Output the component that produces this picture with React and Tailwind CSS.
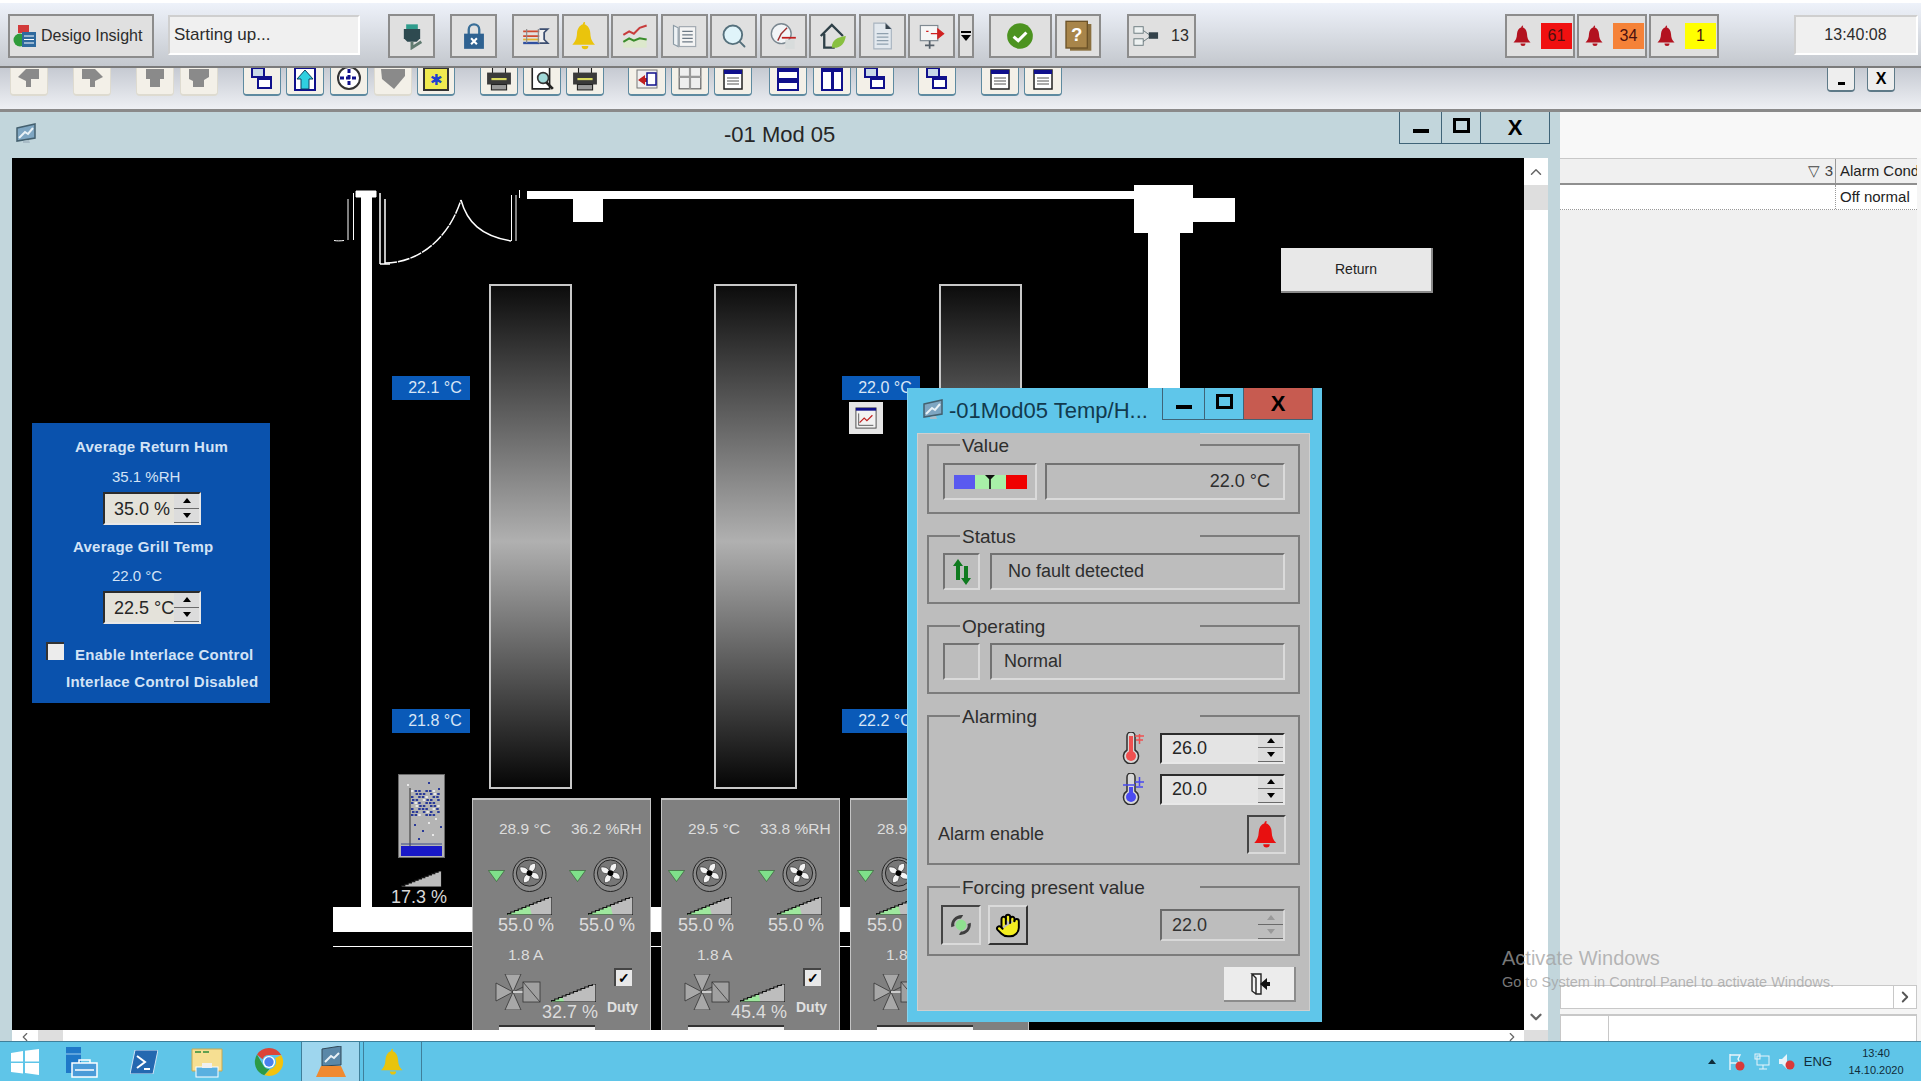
import React from "react";
import { ChevronDown, ChevronLeft, ChevronRight, ChevronUp, Hand, Search } from "lucide-react";

const BELL =
  "M12 1.5a1.6 1.6 0 0 0-1.6 1.7C7.6 4.2 6.2 6.800 6 10c-.2 4-1.200 6.300-3.500 8.500h17c-2.300-2.200-3.300-4.500-3.500-8.500-.2-3.200-1.600-5.800-4.400-6.800A1.600 1.600 0 0 0 12 1.500zM9.500 19.500a2.500 2.500 0 0 0 5 0z";

const Bell = ({ className, fill }) => (
  <svg viewBox="0 0 24 24" className={className}>
    <path d={BELL} fill={fill} />
  </svg>
);

// Desigo window icon, a small tilted monitor
const MonitorIcon = ({ className }) => (
  <svg viewBox="0 0 24 24" className={className}>
    <path d="M3 6l18-4v14L3 19z" fill="#7ea6c2" stroke="#44606f" strokeWidth="1.500" />
    <path d="M5 16l6-6 3 2 5-6" stroke="#e8f1f6" strokeWidth="2" fill="none" />
    <path d="M9 19l6-1 1 3H9z" fill="#a9bcc7" />
  </svg>
);

const Icons = {
  plug: (
    <svg viewBox="0 0 24 24" className="w-7 h-7">
      <rect x="7" y="2" width="10" height="4" fill="#2f9c8c" />
      <path d="M5 6h14v8l-3 3H8l-3-3z" fill="#2e4a50" />
      <path d="M12 17v5l8-5" stroke="#607a70" strokeWidth="2.500" fill="none" />
    </svg>
  ),
  lock: (
    <svg viewBox="0 0 24 24" className="w-7 h-7">
      <path d="M7.500 11V6.500a4.500 4.500 0 0 1 9 0V11" stroke="#3a6f98" strokeWidth="2" fill="none" />
      <rect x="3.500" y="10" width="17" height="13" fill="#2f6291" />
      <path d="M9.500 14l5 5M14.500 14l-5 5" stroke="#fff" strokeWidth="1.800" />
    </svg>
  ),
  compare: (
    <svg viewBox="0 0 24 24" className="w-7 h-7">
      <path d="M1 8h14M1 12h14" stroke="#d04a30" strokeWidth="1.500" />
      <path d="M1 15h14" stroke="#e0b030" strokeWidth="1.500" />
      <path d="M1 18h14" stroke="#3050a0" strokeWidth="2" />
      <path d="M4 6v12M14 6v12" stroke="#8a8a8a" />
      <path d="M15 6h7l-3 3v6l3 3h-7" stroke="#3c4e70" strokeWidth="1.500" fill="#f0f0f0" />
    </svg>
  ),
  bell: <Bell className="w-8 h-8" fill="#eac40c" />,
  trend: (
    <svg viewBox="0 0 24 24" className="w-7 h-7">
      <rect x="2" y="14" width="20" height="8" fill="#dce8cc" />
      <path d="M2 11l5-3 4 2 5-5 6-2" stroke="#c83c3c" strokeWidth="1.800" fill="none" />
      <path d="M2 17l5-3 4 2 5-2 6 1" stroke="#3a8c2c" strokeWidth="1.800" fill="none" />
    </svg>
  ),
  list: (
    <svg viewBox="0 0 24 24" className="w-7 h-7">
      <path d="M3 3l4 2v16l-4-2z" fill="#eef2f5" stroke="#8b9aa5" />
      <rect x="8" y="4" width="14" height="17" fill="#f4f4f4" stroke="#a0a8b0" />
      <path d="M10.500 8h9M10.500 11h9M10.500 14h9M10.500 17h9" stroke="#6d7a86" />
    </svg>
  ),
  search: <Search className="w-7 h-7 text-[#55707c]" fill="#e0f4fa" strokeWidth={1.600} />,
  clock: (
    <svg viewBox="0 0 24 24" className="w-7 h-7">
      <circle cx="10.500" cy="10" r="8.500" fill="#f2f5f7" stroke="#7a8790" strokeWidth="1.200" />
      <path d="M10.500 10l5-5M10.500 10l-3 6" stroke="#a03030" strokeWidth="1.200" />
      <path d="M11 13.500h12" stroke="#c02020" strokeWidth="1.500" />
      <rect x="14" y="15" width="8" height="8" fill="#d8dcdc" />
    </svg>
  ),
  home: (
    <svg viewBox="0 0 24 24" className="w-7 h-7">
      <path d="M1.500 12L11 2.500 20.500 12M4.500 10v12h9" stroke="#2e4048" strokeWidth="2" fill="none" />
      <path d="M11 22c0-7 5-9 12-10-1 7-5 11-12 10z" fill="#88c040" />
    </svg>
  ),
  doc: (
    <svg viewBox="0 0 24 24" className="w-7 h-7">
      <path d="M5 1h10l5 5v17H5z" fill="#e2e8ee" stroke="#a8b4c0" />
      <path d="M15 1l5 5h-5z" fill="#38454f" />
      <path d="M7.500 10h10M7.500 13h10M7.500 16h10M7.500 19h10" stroke="#8fa0ae" />
    </svg>
  ),
  exit: (
    <svg viewBox="0 0 24 24" className="w-7 h-7">
      <rect x="2" y="3" width="15" height="13" fill="#f6f6f6" stroke="#7f8a92" />
      <path d="M7 8h2M11 10h9M17 6l5 4-5 4z" stroke="#d02020" fill="#d02020" />
      <path d="M10 16v7M6 20h8" stroke="#56606a" strokeWidth="1.500" />
    </svg>
  ),
  check: (
    <svg viewBox="0 0 24 24" className="w-7 h-7">
      <circle cx="12" cy="12" r="11" fill="#4c9320" />
      <path d="M6.500 12.500l4 3.500 7-7" stroke="#fff" strokeWidth="2.600" fill="none" />
    </svg>
  ),
  help: (
    <svg viewBox="0 0 24 24" className="w-8 h-8">
      <rect x="6" y="3" width="16" height="20" fill="#8a6f3e" />
      <rect x="3" y="1" width="16" height="20" fill="#a8854a" stroke="#6b5228" />
      <text x="11" y="16" textAnchor="middle" fontSize="14" fontWeight="bold" fill="#fff" fontFamily="Liberation Sans">?</text>
    </svg>
  ),
  tree: (
    <svg viewBox="0 0 28 24" className="w-[26px] h-[24px]">
      <rect x="1" y="2" width="10" height="7" fill="#eef2f2" stroke="#68787c" />
      <rect x="1" y="15" width="10" height="7" fill="#eef2f2" stroke="#68787c" />
      <path d="M11 6l7 5M11 18l7-5" stroke="#68787c" />
      <rect x="17" y="8" width="10" height="7" fill="#33424a" />
    </svg>
  ),
};

const TopButton = ({ children, className = "w-[47px]" }) => (
  <div className={`h-[44px] shrink-0 flex items-center justify-center bg-[#e0e0e0] border-2 border-[#8c8c8c] ${className}`}>
    {children}
  </div>
);

const AlarmButton = ({ count, color }) => (
  <TopButton className="w-[70px] gap-[6px] pl-1">
    <Bell className="w-6 h-7" fill="#b3121f" />
    <div className={`w-[31px] h-[26px] flex items-center justify-center text-[16px] text-[#4a1010] ${color}`}>{count}</div>
  </TopButton>
);

const TopBar = () => (
  <div className="h-[68px] shrink-0 flex pt-[11px] pl-2 border-t-[3px] border-b-2 border-t-white border-b-[#7b7b7b] bg-gradient-to-b from-[#eef2fa] to-[#c4c8ce]">
    <TopButton className="w-[146px] gap-1 !justify-start pl-[3px]">
      <svg viewBox="0 0 24 24" className="w-6 h-7">
        <rect x="5" y="1" width="11" height="8" fill="#d23a3a" />
        <circle cx="7" cy="16" r="6.500" fill="#2f9c3a" />
        <rect x="9" y="8" width="14" height="15" fill="#2f6a9e" />
        <path d="M11 12h10M11 15.500h10M11 19h10" stroke="#fff" />
      </svg>
      <span className="text-[16px] text-[#2c2c2c]">Desigo Insight</span>
    </TopButton>
    <div className="w-[192px] h-[40px] mt-[1px] ml-[14px] shrink-0 pl-[4px] flex items-center bg-[#f0f0f0] border-2 border-[#cfcfcf] border-b-white border-r-white text-[17px] text-[#2c2c2c]">
      Starting up...
    </div>
    <div className="ml-[28px]"><TopButton>{Icons.plug}</TopButton></div>
    <div className="ml-[15px]"><TopButton>{Icons.lock}</TopButton></div>
    <div className="ml-[15px] flex gap-[2.500px]">
      <TopButton>{Icons.compare}</TopButton>
      <TopButton>{Icons.bell}</TopButton>
      <TopButton>{Icons.trend}</TopButton>
      <TopButton>{Icons.list}</TopButton>
      <TopButton>{Icons.search}</TopButton>
      <TopButton>{Icons.clock}</TopButton>
      <TopButton>{Icons.home}</TopButton>
      <TopButton>{Icons.doc}</TopButton>
      <TopButton>{Icons.exit}</TopButton>
      <TopButton className="w-[16px] flex-col">
        <div className="w-[10px] h-[2px] bg-black mb-[2px]" />
        <div className="w-0 h-0 border-x-[5px] border-x-transparent border-t-[6px] border-t-black" />
      </TopButton>
    </div>
    <div className="ml-[15px] flex gap-[3px]">
      <TopButton className="w-[63px]">{Icons.check}</TopButton>
      <TopButton className="w-[46px]">{Icons.help}</TopButton>
    </div>
    <div className="ml-[26px]">
      <TopButton className="w-[69px] gap-3">
        {Icons.tree}
        <span className="text-[16px] text-[#2c2c2c]">13</span>
      </TopButton>
    </div>
    <div className="ml-[309px] flex gap-[2px]">
      <AlarmButton count="61" color="bg-[#f01010]" />
      <AlarmButton count="34" color="bg-[#f58238]" />
      <AlarmButton count="1" color="bg-[#ffff00]" />
    </div>
    <div className="w-[124px] h-[40px] mt-[1px] ml-[75px] shrink-0 flex items-center justify-center bg-[#f0f0f0] border-2 border-[#cfcfcf] border-b-white border-r-white text-[16px] text-[#2c2c2c]">
      13:40:08
    </div>
  </div>
);

const GREY_SHAPES = {
  left: "M1 8L9 0h13v10h-8v8H9v-6z",
  right: "M23 8L15 0H2v10h8v8h5v-6z",
  sq: "M3 0h18v10h-4v8H7v-8H3z",
  sqr: "M2 0h20v8l-5 3v7H6v-6L2 10z",
  down: "M0 0h24v7L13 20 1 10z",
};

const SmallIcon = ({ kind }) => {
  if (GREY_SHAPES[kind])
    return (
      <svg viewBox="0 0 24 20" className="w-[24px] h-[20px] mb-[2px]">
        <path d={GREY_SHAPES[kind]} fill="#8a8a8a" />
      </svg>
    );
  if (kind === "split-h")
    return <div className="w-[22px] h-[24px] border-2 border-[#10108c] border-t-[5px] bg-white flex flex-col justify-center"><div className="h-[5px] bg-[#10108c]" /></div>;
  if (kind === "split-v")
    return <div className="w-[22px] h-[24px] border-2 border-[#10108c] border-t-[5px] bg-white flex justify-center"><div className="w-[3px] bg-[#10108c]" /></div>;
  if (kind === "casc")
    return (
      <svg viewBox="0 0 24 24" className="w-[24px] h-[24px]">
        <rect x="2" y="1" width="12" height="9" fill="#c8d8e8" stroke="#10108c" strokeWidth="2" />
        <rect x="8" y="10" width="13" height="11" fill="#fff" stroke="#10108c" strokeWidth="2" />
        <rect x="8" y="10" width="13" height="3" fill="#10108c" />
      </svg>
    );
  if (kind === "up")
    return (
      <svg viewBox="0 0 24 24" className="w-[24px] h-[24px]">
        <rect x="2" y="1" width="20" height="22" fill="#fff" stroke="#10108c" strokeWidth="2" />
        <path d="M12 3l8 9h-4v10H8V12H4z" fill="#30d0e0" stroke="#104060" />
      </svg>
    );
  if (kind === "compass")
    return (
      <svg viewBox="0 0 24 24" className="w-[24px] h-[24px]">
        <circle cx="12" cy="11" r="11" fill="#fff" stroke="#333" strokeWidth="2" />
        <path d="M12 2v18M3 11h18" stroke="#10108c" strokeWidth="3" strokeDasharray="4 2" />
      </svg>
    );
  if (kind === "sun")
    return (
      <div className="w-[26px] h-[24px] bg-[#f0ea50] border-2 border-[#333] flex items-center justify-center text-[#2040d0] text-[15px] leading-none">✱</div>
    );
  if (kind === "print")
    return (
      <svg viewBox="0 0 24 24" className="w-[26px] h-[26px]">
        <rect x="6" y="0" width="12" height="8" fill="#ddd" stroke="#222" />
        <rect x="1" y="7" width="22" height="11" fill="#3a3a3a" />
        <rect x="5" y="12" width="14" height="2" fill="#dada60" />
        <rect x="5" y="18" width="14" height="5" fill="#999" stroke="#222" />
      </svg>
    );
  if (kind === "preview")
    return (
      <svg viewBox="0 0 24 24" className="w-[26px] h-[26px]">
        <path d="M3 1h16v21H3z" fill="#fff" stroke="#222" strokeWidth="1.500" />
        <circle cx="13" cy="12" r="5" fill="#a0d8d8" stroke="#333" strokeWidth="1.500" />
        <path d="M16 16l6 6" stroke="#222" strokeWidth="2.500" />
      </svg>
    );
  if (kind === "table")
    return (
      <svg viewBox="0 0 24 24" className="w-[26px] h-[26px]">
        <rect x="2" y="1" width="20" height="21" fill="#eee" stroke="#555" />
        <path d="M12 1v21M2 11h20" stroke="#999" strokeWidth="2" />
      </svg>
    );
  if (kind === "note")
    return (
      <svg viewBox="0 0 24 24" className="w-[24px] h-[24px]">
        <rect x="3" y="3" width="18" height="19" fill="#fff" stroke="#222" strokeWidth="1.500" />
        <rect x="3" y="3" width="18" height="4" fill="#10108c" />
        <path d="M6 11h12M6 14h12M6 17h12" stroke="#555" />
      </svg>
    );
  return (
    <svg viewBox="0 0 24 24" className="w-[24px] h-[24px]">
      <rect x="2" y="3" width="20" height="18" fill="#f0f0f0" stroke="#777" />
      <path d="M3 13l7-5v3h5v4h-5v3z" fill="#c02020" />
      <rect x="12" y="6" width="9" height="12" fill="#fff" stroke="#10108c" strokeWidth="1.500" />
    </svg>
  );
};

const ToolButton = ({ kind, off, className = "" }) => (
  <div
    className={`w-[38px] h-[28px] shrink-0 overflow-hidden flex justify-center items-end pb-[3px] rounded-b-[4px] bg-[#f3f0e8] border-x border-b-2 ${
      off ? "border-[#dedbd0]" : "border-[#5e8aa0]"
    } ${className}`}
  >
    <SmallIcon kind={kind} />
  </div>
);

const SecondBar = () => (
  <div className="h-[44px] shrink-0 flex items-start pl-[10px] border-b-[3px] border-b-[#8a8a8a] bg-gradient-to-b from-[#c6cad2] to-[#eef0f4]">
    <ToolButton off kind="left" />
    <ToolButton off kind="right" className="ml-[25px]" />
    <ToolButton off kind="sq" className="ml-[25px]" />
    <ToolButton off kind="sqr" className="ml-[6px]" />
    <ToolButton kind="casc" className="ml-[25px]" />
    <ToolButton kind="up" className="ml-[5px]" />
    <ToolButton kind="compass" className="ml-[6px]" />
    <ToolButton off kind="down" className="ml-[6px]" />
    <ToolButton kind="sun" className="ml-[5px]" />
    <ToolButton kind="print" className="ml-[25px]" />
    <ToolButton kind="preview" className="ml-[5px]" />
    <ToolButton kind="print" className="ml-[5px]" />
    <ToolButton kind="redbox" className="ml-[24px]" />
    <ToolButton kind="table" className="ml-[5px]" />
    <ToolButton kind="note" className="ml-[5px]" />
    <ToolButton kind="split-h" className="ml-[17px]" />
    <ToolButton kind="split-v" className="ml-[6px]" />
    <ToolButton kind="casc" className="ml-[5px]" />
    <ToolButton kind="casc" className="ml-[24px]" />
    <ToolButton kind="note" className="ml-[25px]" />
    <ToolButton kind="note" className="ml-[5px]" />
    <div className="ml-[765px] w-[28px] h-[24px] rounded-b-[4px] bg-[#eeeeee] border-x border-b-2 border-[#5e7a88] flex justify-center items-center">
      <div className="w-[7px] h-[3px] bg-black mt-2" />
    </div>
    <div className="ml-[12px] w-[28px] h-[24px] rounded-b-[4px] bg-[#eeeeee] border-x border-b-2 border-[#5e7a88] flex justify-center items-center text-[16px] font-bold text-black">
      X
    </div>
  </div>
);

// staircase ramp used for fan speed and valve position
const Ramp = ({ pct = 0, className = "w-[45px] h-[18px]" }) => {
  const steps = 12;
  const pts = (limit) => {
    let d = "M0 18";
    for (let i = 1; i <= steps; i++) {
      const x = (i * 45) / steps;
      if (x > limit + 0.01) break;
      const y = 18 - (i * 18) / steps;
      d += `L${x - 45 / steps} ${y}L${x} ${y}`;
    }
    return d;
  };
  const end = (pct / 100) * 45;
  return (
    <svg viewBox="0 0 45 18" className={className}>
      <path d={pts(45) + "L45 18Z"} fill="#bdbdbd" />
      {pct > 0 && <path d={pts(end) + `L${end} 18Z`} fill="#9ee89e" />}
      <path d={pts(45) + "L45 18L0 18"} fill="none" stroke="#111" strokeWidth="1.200" />
    </svg>
  );
};

const Fan = () => (
  <svg viewBox="0 0 36 36" className="w-[35px] h-[35px]">
    <ellipse cx="18" cy="18" rx="17" ry="17.500" fill="#8c8c8c" stroke="#222" strokeWidth="1" />
    <circle cx="18" cy="16.500" r="13.500" fill="#777" stroke="#222" />
    <path d="M18 16.500c-2-7 1-10 6-10 1 5-1 8-6 10zM18 16.500c7-2 10 1 10 6-5 1-8-1-10-6zM18 16.500c2 7-1 10-6 10-1-5 1-8 6-10zM18 16.500c-7 2-10-1-10-6 5-1 8 1 10 6z" fill="#f4f4f4" stroke="#222" strokeWidth=".6" />
    <circle cx="18" cy="16.500" r="3" fill="#000" />
  </svg>
);

const Valve = () => (
  <svg viewBox="0 0 46 36" className="w-[46px] h-[36px]">
    <path d="M10 0h16l-8 18zM10 36h16l-8-18zM1 9v18l17-9zM18 18l12-6" fill="#a8a8a8" stroke="#333" strokeWidth=".8" />
    <path d="M18 18h10" stroke="#ccc" strokeWidth="2" />
    <rect x="28" y="8" width="17" height="20" fill="#a0a0a0" stroke="#333" strokeWidth=".8" />
    <path d="M28 8l17 20" stroke="#333" strokeWidth=".8" />
  </svg>
);

const FanColumn = ({ width }) => (
  <div className={width}>
    <div className="flex items-center gap-[7px] h-[38px]">
      <svg viewBox="0 0 17 12" className="w-[17px] h-[12px] mt-1">
        <path d="M.5.5h16L8.500 11.500z" fill="#7fe08a" stroke="#2a5a2a" strokeWidth=".6" />
      </svg>
      <Fan />
    </div>
    <div className="ml-[19px] mt-[4px] h-[18px]"><Ramp pct={55} /></div>
    <div className="ml-[10px] h-[21px] text-[18px] leading-[21px] text-[#dcdcdc]">55.0 %</div>
  </div>
);

const AhuPanel = ({ left, temp, hum, amps, valve, valvePct, fanGap }) => (
  <div className={`absolute top-[640px] w-[179px] h-[240px] bg-[#808080] border-t-2 border-x border-[#c4c4c4] text-[#dcdcdc] ${left}`}>
    <div className="flex pl-[26px] pt-[20px] text-[15.500px] leading-[18px]">
      <span className="w-[72px]">{temp}</span>
      <span>{hum}</span>
    </div>
    <div className={`flex mt-[17px] ${fanGap === 90 ? "pl-[6px]" : "pl-[15px]"}`}>
      <FanColumn width={fanGap === 90 ? "w-[90px]" : "w-[81px]"} />
      <FanColumn width="w-[80px]" />
    </div>
    <div className="ml-[35px] mt-[10px] text-[15.500px] leading-[18px]">{amps}</div>
    <div className="flex h-[61px]">
      <div className="ml-[22px] mt-[10px]"><Valve /></div>
      <div className="ml-[10px] mt-[20px] w-[50px]">
        <Ramp pct={valvePct} />
        <div className="-ml-[9px] text-[18px] leading-[21px] whitespace-nowrap">{valve}</div>
      </div>
      <div className="ml-[6px] mt-[4px] flex flex-col items-start">
        <div className="ml-[7px] w-[18px] h-[18px] bg-[#e8e8e8] border-t-2 border-l-2 border-[#444] flex items-center justify-center text-[14px] font-bold leading-none text-black">✓</div>
        <div className="mt-[12px] text-[14px] font-bold leading-[18px] text-[#e0e0e0]">Duty</div>
      </div>
    </div>
    <div className="ml-[26px] w-[96px] h-[20px] bg-[#f2f2f2] border-t-2 border-[#333]" />
  </div>
);

const TempTag = ({ className, children }) => (
  <div className={`absolute w-[78px] h-[24px] pl-[8px] flex items-center justify-center bg-[#0a5ab8] text-[16px] text-[#d8e6f6] ${className}`}>
    {children}
  </div>
);

const Tower = ({ className }) => (
  <div className={`absolute top-[126px] w-[83px] h-[505px] border-2 border-[#c8c8c8] bg-[linear-gradient(to_bottom,#0c0c0c,#b0b0b0_51%,#060606)] ${className}`} />
);

const Spin = ({ value, width = "w-[125px]", height = "h-[31px]", pad = "pl-[10px]", text = "text-[18px]", disabled, inner = "bg-[#e4e4e4]" }) => (
  <div className={`flex shrink-0 border-t-2 border-l-2 border-r-2 border-b-2 ${disabled ? "border-t-[#6a6a6a] border-l-[#6a6a6a] border-r-[#d8d8d8] border-b-[#d8d8d8]" : "border-t-[#2c2c2c] border-l-[#2c2c2c] border-r-[#e8e8e8] border-b-[#e8e8e8]"} ${width} ${height}`}>
    <div className={`flex-1 min-w-0 overflow-hidden whitespace-nowrap flex items-center ${pad} ${text} ${disabled ? "bg-[#bdbdbd] text-[#333]" : `${inner} text-[#262626]`}`}>
      {value}
    </div>
    <div className={`w-[25px] shrink-0 flex flex-col ${disabled ? "bg-[#bdbdbd]" : "bg-[#dcdcdc]"}`}>
      <div className="flex-1 flex items-center justify-center border-b border-[#6a6a6a]">
        <div className={`w-0 h-0 border-x-[4px] border-x-transparent border-b-[5px] ${disabled ? "border-b-[#999]" : "border-b-black"}`} />
      </div>
      <div className="flex-1 flex items-center justify-center border-b border-[#6a6a6a]">
        <div className={`w-0 h-0 border-x-[4px] border-x-transparent border-t-[5px] ${disabled ? "border-t-[#999]" : "border-t-black"}`} />
      </div>
    </div>
  </div>
);

const BluePanel = () => (
  <div className="absolute left-[20px] top-[265px] w-[238px] h-[280px] bg-[#0a52ad] pt-[14px] text-[15px] leading-[20px] text-[#d3e3f6]">
    <div className="ml-[43px] font-bold tracking-[.25px]">Average Return Hum</div>
    <div className="ml-[80px] mt-[10px]">35.1 %RH</div>
    <div className="ml-[71px] mt-[5px]">
      <Spin value="35.0 %" width="w-[98px]" height="h-[33px]" pad="pl-[9px]" inner="bg-[#e4e2da]" />
    </div>
    <div className="ml-[41px] mt-[12px] font-bold tracking-[.25px]">Average Grill Temp</div>
    <div className="ml-[80px] mt-[9px]">22.0 °C</div>
    <div className="ml-[71px] mt-[5px]">
      <Spin value="22.5 °C" width="w-[98px]" height="h-[33px]" pad="pl-[9px]" inner="bg-[#e4e2da]" />
    </div>
    <div className="flex mt-[18px] ml-[14px]">
      <div className="w-[18px] h-[18px] bg-[#ececec] border-t-2 border-l-2 border-[#333]" />
      <div className="ml-[11px] mt-[3px] font-bold tracking-[.25px] whitespace-nowrap">Enable Interlace Control</div>
    </div>
    <div className="ml-[34px] mt-[7px] font-bold tracking-[.25px] whitespace-nowrap">Interlace Control Disabled</div>
  </div>
);

const dots = [];
for (let row = 0; row < 9; row++) {
  for (let col = 0; col < 8; col++) {
    if ((row * 3 + col * 5) % 4 !== 3) dots.push([13 + col * 3.600 + (row % 2), 16 + row * 3]);
  }
}
const looseDots = [[9, 10], [30, 8], [40, 14], [37, 44], [16, 50], [24, 56], [34, 60], [42, 52], [20, 64], [30, 48]];

const Device = () => (
  <svg viewBox="0 0 47 84" className="absolute left-[386px] top-[616px] w-[47px] h-[84px]">
    <rect x=".5" y=".5" width="46" height="83" fill="#b4b4b4" stroke="#6a6a6a" />
    {dots.map(([x, y], i) => (
      <rect key={i} x={x} y={y} width="2.500" height="2" fill={i % 5 === 0 ? "#e8e8e8" : "#2a3a98"} />
    ))}
    {looseDots.map(([x, y], i) => (
      <rect key={i} x={x} y={y} width="2" height="2" fill={i % 3 === 0 ? "#e8e8e8" : "#2a3a98"} />
    ))}
    <path d="M12 14v66" stroke="#333" />
    <rect x="3" y="72" width="41" height="10" fill="#1818c8" />
    <path d="M3 70h41" stroke="#3a4a88" />
  </svg>
);

const Duct = ({ className }) => <div className={`absolute bg-white ${className}`} />;

const Canvas = () => (
  <div className="relative w-[1512px] h-[872px] overflow-hidden bg-black">
    <Duct className="left-[515px] top-[33px] w-[619px] h-[8px]" />
    <Duct className="left-[561px] top-[41px] w-[30px] h-[23px]" />
    <Duct className="left-[1122px] top-[27px] w-[59px] h-[48px]" />
    <Duct className="left-[1181px] top-[40px] w-[42px] h-[24px]" />
    <Duct className="left-[1136px] top-[75px] w-[32px] h-[200px]" />
    <Duct className="left-[349px] top-[39px] w-[11px] h-[710px]" />
    <Duct className="left-[321px] top-[749px] w-[517px] h-[25px]" />
    <Duct className="left-[321px] top-[788px] w-[517px] h-[1px]" />
    {/* door swing drawing */}
    <svg viewBox="0 0 200 90" className="absolute left-[318px] top-[27px] w-[200px] h-[90px]" fill="none" stroke="#fff">
      <path d="M26 6h20v6H26z" fill="#fff" />
      <path d="M18 14v41M23.500 8v47M4 55.500c3 .5 6 .5 10 0" />
      <path d="M50 8v71M55 14v65M50 79h10" strokeWidth="1.500" />
      <path d="M55 78c30 0 62-20 76-63" strokeWidth="1.500" strokeDasharray="12 1" />
      <path d="M131 15c6 22 20 36 50 41" strokeWidth="1.500" />
      <path d="M181.500 10v46M186 10v46M189.500 5v8" />
    </svg>
    <div className="absolute left-[1269px] top-[90px] w-[152px] h-[45px] flex items-center justify-center bg-[#e8e8e8] border-r-2 border-b-2 border-[#8a8a8a] text-[14px] text-[#222]">
      Return
    </div>
    <Tower className="left-[477px]" />
    <Tower className="left-[702px]" />
    <Tower className="left-[927px]" />
    <TempTag className="left-[380px] top-[218px]">22.1 °C</TempTag>
    <TempTag className="left-[380px] top-[551px]">21.8 °C</TempTag>
    <TempTag className="left-[830px] top-[218px]">22.0 °C</TempTag>
    <TempTag className="left-[830px] top-[551px]">22.2 °C</TempTag>
    <div className="absolute left-[837px] top-[244px] w-[34px] h-[32px] bg-[#e6e6e6] flex items-center justify-center">
      <svg viewBox="0 0 24 24" className="w-[24px] h-[22px]">
        <rect x="1" y="1" width="22" height="22" fill="#f2f2f2" stroke="#444" />
        <rect x="1" y="1" width="22" height="3" fill="#10108c" />
        <path d="M4 7v13h16" stroke="#555" fill="none" />
        <path d="M5 17l5-5 3 3 6-6" stroke="#c02020" fill="none" strokeWidth="1.300" />
      </svg>
    </div>
    <BluePanel />
    <Device />
    <Ramp className="absolute left-[388px] top-[713px] w-[43px] h-[16px]" />
    <div className="absolute left-[379px] top-[728px] text-[18px] leading-[22px] text-[#d8d8d8]">17.3 %</div>
    <AhuPanel left="left-[460px]" temp="28.9 °C" hum="36.2 %RH" amps="1.8 A" valve="32.7 %" valvePct={30} fanGap={81} />
    <AhuPanel left="left-[649px]" temp="29.5 °C" hum="33.8 %RH" amps="1.8 A" valve="45.4 %" valvePct={45} fanGap={90} />
    <AhuPanel left="left-[838px]" temp="28.9 °C" hum="36.2 %RH" amps="1.8 A" valve="32.7 %" valvePct={30} fanGap={90} />
  </div>
);

const WindowControls = ({ className, close = "bg-transparent" }) => (
  <div className={`flex border-l border-b border-r border-[#3f6478] ${className}`}>
    <div className="w-[42px] flex items-center justify-center border-r border-[#3f6478]">
      <div className="w-[16px] h-[4px] mt-[6px] bg-black" />
    </div>
    <div className="w-[39px] flex items-center justify-center border-r border-[#3f6478]">
      <div className="w-[17px] h-[15px] mb-[5px] border-[3px] border-black" />
    </div>
    <div className={`flex-1 flex items-center justify-center text-[22px] leading-none font-bold text-black ${close}`}>X</div>
  </div>
);

const Group = ({ title, className, children }) => (
  <div className={`relative border-2 border-[#7c7c7c] ${className}`}>
    <div className="absolute left-[31px] -top-[13px] w-[240px] h-[26px] pl-[2px] bg-[#bdbdbd] text-[19px] leading-[26px] text-[#2e2e2e]">
      {title}
    </div>
    {children}
  </div>
);

const Sunken = ({ className, children }) => (
  <div className={`flex items-center h-[37px] border-t-2 border-l-2 border-r-2 border-b-2 border-t-[#727272] border-l-[#727272] border-r-[#dadada] border-b-[#dadada] text-[18px] text-[#2e2e2e] ${className}`}>
    {children}
  </div>
);

const Thermo = ({ color, sign }) => (
  <svg viewBox="0 0 26 32" className="w-[26px] h-[32px] shrink-0">
    <path d="M8 4a4 4 0 0 1 8 0v14a7.500 7.500 0 1 1-8 0z" fill="#d8d8d8" stroke="#2e2e2e" strokeWidth="1.500" />
    <circle cx="12" cy="24" r="5" fill={color} />
    <rect x="10" y={sign === "+" ? 4 : 14} width="4" height={sign === "+" ? 18 : 10} fill={color} />
    <path d={sign === "+" ? "M16 4h9M20.500 2v10M17 8h7" : "M4 12h12M16 9h9M20.500 4v9M17 14h7"} stroke={color} strokeWidth="1.500" />
  </svg>
);

const Dialog = () => (
  <div className="absolute left-[907px] top-[388px] w-[415px] h-[634px] flex flex-col bg-[#5fc6ea] border-l border-[#88d4ee]">
    <div className="h-[45px] shrink-0 flex items-start">
      <MonitorIcon className="w-[24px] h-[24px] ml-[13px] mt-[10px] shrink-0" />
      <div className="ml-[4px] mt-[9px] w-[212px] text-[22px] leading-[28px] text-[#123a4e] whitespace-nowrap">-01Mod05 Temp/H...</div>
      <WindowControls className="ml-auto mr-[9px] w-[151px] h-[32px]" close="bg-[#c75b50]" />
    </div>
    <div className="ml-[9px] mr-[12px] h-[578px] px-[9px] pt-[10px] bg-[#bdbdbd] border border-[#cfcfcf]">
      <Group title="Value" className="h-[70px]">
        <div className="flex pl-[14px] pt-[17px]">
          <Sunken className="w-[94px] justify-center">
            <div className="w-[21px] h-[14px] bg-[#5a5af0]" />
            <div className="w-[31px] h-[14px] bg-[#a8f0a8] flex justify-center">
              <svg viewBox="0 0 10 14" className="w-[10px] h-[14px]">
                <path d="M0 0h10L5 5z M4.200 4h1.600v10H4.200z" fill="#111" />
              </svg>
            </div>
            <div className="w-[21px] h-[14px] bg-[#f00000]" />
          </Sunken>
          <Sunken className="w-[240px] ml-[8px] justify-end pr-[13px]">22.0 °C</Sunken>
        </div>
      </Group>
      <Group title="Status" className="h-[69px] mt-[21px]">
        <div className="flex pl-[14px] pt-[16px]">
          <Sunken className="w-[37px] justify-center">
            <svg viewBox="0 0 20 26" className="w-[20px] h-[26px]">
              <path d="M6 0l5 7H8v14H4V7H1zM14 26l-5-7h3V7h4v12h3z" fill="#0f7a1f" />
            </svg>
          </Sunken>
          <Sunken className="w-[295px] ml-[10px] pl-[16px]">No fault detected</Sunken>
        </div>
      </Group>
      <Group title="Operating" className="h-[69px] mt-[21px]">
        <div className="flex pl-[14px] pt-[16px]">
          <Sunken className="w-[37px]" />
          <Sunken className="w-[295px] ml-[10px] pl-[12px]">Normal</Sunken>
        </div>
      </Group>
      <Group title="Alarming" className="h-[150px] mt-[21px]">
        <div className="flex justify-end items-center gap-[15px] pr-[13px] pt-[15px]">
          <Thermo color="#f05050" sign="+" />
          <Spin value="26.0" />
        </div>
        <div className="flex justify-end items-center gap-[15px] pr-[13px] mt-[9px]">
          <Thermo color="#4a4af0" sign="-" />
          <Spin value="20.0" />
        </div>
        <div className="flex items-center justify-between pl-[9px] pr-[12px] mt-[10px]">
          <span className="text-[18px] text-[#2e2e2e]">Alarm enable</span>
          <div className="w-[39px] h-[39px] flex items-center justify-center border-t-2 border-l-2 border-r-2 border-b-2 border-t-[#444] border-l-[#444] border-r-[#dadada] border-b-[#dadada]">
            <Bell className="w-[31px] h-[33px]" fill="#e81010" />
          </div>
        </div>
      </Group>
      <Group title="Forcing present value" className="h-[70px] mt-[21px]">
        <div className="flex items-center pl-[12px] pt-[17px]">
          <div className="w-[40px] h-[40px] flex items-center justify-center border-t-2 border-l-2 border-r-2 border-b-2 border-t-[#444] border-l-[#444] border-r-[#dadada] border-b-[#dadada]">
            <svg viewBox="0 0 24 24" className="w-[26px] h-[26px]">
              <circle cx="12" cy="12" r="5" fill="#8fe08f" />
              <path d="M3 14C2 7 8 2 14 3l-2 3C8 6 5 9 6 13zM21 10c1 7-5 12-11 11l2-3c4 0 7-3 6-7z" fill="#3e3e3e" />
            </svg>
          </div>
          <div className="w-[40px] h-[40px] ml-[7px] flex items-center justify-center border-t-2 border-l-2 border-r-2 border-b-2 border-t-[#dadada] border-l-[#dadada] border-r-[#333] border-b-[#333]">
            <Hand className="w-[26px] h-[27px] text-black" fill="#f4ee20" strokeWidth={1.800} />
          </div>
          <div className="ml-auto mr-[13px]">
            <Spin value="22.0" disabled height="h-[32px]" />
          </div>
        </div>
      </Group>
      <div className="flex justify-end pr-[4px] mt-[11px]">
        <div className="w-[72px] h-[35px] flex items-center justify-center bg-[#ececec] border-r-2 border-b-2 border-[#8c8c8c]">
          <svg viewBox="0 0 24 24" className="w-[24px] h-[24px]">
            <path d="M5 2h9v20H9V6L5 2zM5 2v17l4 3" fill="#f6f6f6" stroke="#222" strokeWidth="1.400" />
            <path d="M13 12l7-6v4h3v4h-3v4z" fill="#111" />
          </svg>
        </div>
      </div>
    </div>
  </div>
);

const ModWindow = () => (
  <div className="w-[1560px] shrink-0 flex flex-col bg-[#c2d6dc]">
    <div className="h-[46px] shrink-0 relative flex items-start">
      <MonitorIcon className="w-[24px] h-[26px] ml-[14px] mt-[9px]" />
      <div className="w-[1512px] -ml-[26px] pl-[712px] pt-[9px] text-[22px] leading-[28px] text-[#262626]">-01 Mod 05</div>
      <WindowControls className="absolute left-[1399px] top-0 w-[151px] h-[32px]" />
    </div>
    <div className="flex pl-[12px]">
      <Canvas />
      <div className="w-[24px] h-[872px] flex flex-col items-center bg-white">
        <div className="h-[27px] flex items-center">
          <ChevronUp className="w-[18px] h-[18px] text-[#666]" />
        </div>
        <div className="w-full h-[25px] bg-[#dedede]" />
        <div className="mt-auto mb-[4px]">
          <ChevronDown className="w-[18px] h-[18px] text-[#666]" strokeWidth={3} />
        </div>
      </div>
    </div>
    <div className="h-[11px] ml-[12px] w-[1536px] flex bg-white overflow-hidden">
      <div className="w-[26px] flex items-start justify-center">
        <ChevronLeft className="w-[14px] h-[14px] text-[#666]" />
      </div>
      <div className="w-[25px] h-full bg-[#dedede]" />
      <div className="ml-auto w-[24px] flex items-start justify-center">
        <ChevronRight className="w-[14px] h-[14px] text-[#666]" />
      </div>
      <div className="w-[24px] h-full bg-[#dedede]" />
    </div>
  </div>
);

const RightPanel = () => (
  <div className="flex-1 flex flex-col bg-[#f5f5f5] pr-[4px]">
    <div className="h-[46px] bg-[#f8f8f8] -mr-[4px]" />
    <div className="h-[27px] flex justify-end bg-[#f0f0f0] border-t border-b-2 border-t-[#c8c8c8] border-b-[#8f8f8f]">
      <span className="text-[15px] text-[#444] pr-[2px] self-center">▽ 3</span>
      <div className="w-[82px] border-l border-[#999] pl-[4px] text-[15px] text-[#222] whitespace-nowrap overflow-hidden leading-[24px]">Alarm Cond</div>
    </div>
    <div className="h-[25px] flex justify-end bg-white border-b border-dotted border-[#999]">
      <div className="w-[82px] border-l border-dotted border-[#999] pl-[4px] text-[15px] text-[#222] leading-[24px]">Off normal</div>
    </div>
    <div className="flex-1 bg-[#f0f0f0]" />
    <div className="h-[24px] flex justify-end bg-white border border-[#c8c8c8]">
      <div className="w-[23px] border-l border-[#c8c8c8] flex items-center justify-center">
        <ChevronRight className="w-[18px] h-[18px] text-[#555]" strokeWidth={2.500} />
      </div>
    </div>
    <div className="h-[27px] mt-[5px] flex bg-white border-t-2 border-x border-[#c8c8c8]">
      <div className="w-[48px] border-r border-[#c8c8c8]" />
    </div>
  </div>
);

const Chrome = () => (
  <svg viewBox="0 0 32 32" className="w-[30px] h-[30px]">
    <path d="M16 1a15 15 0 0 1 13 7.500H16a7.500 7.500 0 0 0-7 4.500L3.200 8A15 15 0 0 1 16 1z" fill="#db4437" />
    <path d="M3.200 8L9.500 19a7.500 7.500 0 0 0 7 4.500L11 30.200A15 15 0 0 1 3.200 8z" fill="#2c9a46" />
    <path d="M29 8.500A15 15 0 0 1 16 31l-5-.8 6.500-6.800A7.500 7.500 0 0 0 22.500 12z" fill="#f4c20d" />
    <circle cx="16" cy="16" r="6.500" fill="#fff" />
    <circle cx="16" cy="16" r="5" fill="#4a80ee" />
  </svg>
);

const Taskbar = () => (
  <div className="relative h-[40px] shrink-0 flex items-center bg-[#5fc5e8] border-t border-[#3f7f9a]">
    <svg viewBox="0 0 28 26" className="ml-[11px] w-[28px] h-[26px]">
      <path d="M0 4l12-2v10.500H0zM14 1.700L28 0v12.500H14zM0 14h12v10.500L0 23zM14 14h14v12l-14-2z" fill="#fff" />
    </svg>
    <svg viewBox="0 0 33 32" className="ml-[26px] w-[33px] h-[32px]">
      <rect x="1" y="1" width="15" height="26" fill="#1f78c8" />
      <path d="M1 8h15" stroke="#9fd0f0" />
      <rect x="7" y="17" width="25" height="14" fill="#4a9bd8" stroke="#fff" strokeWidth="1.500" />
      <path d="M14 17v-3h11v3M10 24h19" stroke="#fff" strokeWidth="1.500" fill="none" />
    </svg>
    <svg viewBox="0 0 28 24" className="ml-[32px] w-[28px] h-[24px]">
      <path d="M5 0h23l-5 24H0z" fill="#2468b0" stroke="#cfe4f4" />
      <path d="M7 6l8 6-8 6M14 19h6" stroke="#fff" strokeWidth="2" fill="none" />
    </svg>
    <svg viewBox="0 0 32 32" className="ml-[33px] w-[32px] h-[32px]">
      <path d="M1 3h30v22H1z" fill="#f6df92" stroke="#c8a850" />
      <path d="M4 6h6M12 6h6" stroke="#60a050" strokeWidth="2" />
      <rect x="5" y="21" width="22" height="10" fill="#5ab0e0" stroke="#fff" />
      <rect x="11" y="17" width="10" height="5" fill="#f0f0f0" />
    </svg>
    <div className="ml-[31px]"><Chrome /></div>
    <div className="ml-[17px] w-[59px] h-full flex items-center justify-center bg-[#9ed6ee] border-x border-[#3f7f9a]">
      <svg viewBox="0 0 32 32" className="w-[32px] h-[32px]">
        <path d="M7 3l19-3v19l-19 1z" fill="#5a88a8" stroke="#304858" />
        <path d="M10 16l6-6 3 2 5-5" stroke="#e8f1f6" strokeWidth="2" fill="none" />
        <path d="M6 20h20l5 11H1z" fill="#f08a30" />
      </svg>
    </div>
    <div className="ml-[3px] w-[59px] h-full flex items-center justify-center border-x border-[#3f7f9a]">
      <Bell className="w-[30px] h-[32px]" fill="#e8c40c" />
    </div>
    <div className="ml-auto flex items-center text-[#0f2c3a]">
      <div className="w-0 h-0 border-x-[4px] border-x-transparent border-b-[5px] border-b-[#0f2c3a]" />
      <svg viewBox="0 0 16 18" className="ml-[13px] w-[16px] h-[18px]">
        <path d="M1 1v16M1 2h10l-2 4 2 4H1" stroke="#e8f4fa" fill="none" strokeWidth="1.400" />
        <circle cx="11" cy="13" r="4.500" fill="#d83a3a" />
      </svg>
      <svg viewBox="0 0 16 18" className="ml-[9px] w-[16px] h-[18px]">
        <rect x="1" y="1" width="5" height="5" fill="none" stroke="#e8f4fa" />
        <rect x="3" y="3" width="12" height="9" fill="none" stroke="#e8f4fa" />
        <path d="M9 12v4M5 16h8" stroke="#e8f4fa" />
      </svg>
      <svg viewBox="0 0 18 18" className="ml-[8px] w-[18px] h-[18px]">
        <path d="M1 6h3l5-5v15l-5-5H1z" fill="#e8f4fa" />
        <circle cx="12" cy="12" r="4.500" fill="#d83a3a" />
      </svg>
      <span className="ml-[8px] text-[13px]">ENG</span>
      <div className="ml-[15px] mr-[16px] w-[58px] text-center text-[11px] leading-[17px]">
        <div>13:40</div>
        <div>14.10.2020</div>
      </div>
    </div>
  </div>
);

export default function App() {
  return (
    <div className="relative w-[1921px] h-[1081px] overflow-hidden flex flex-col bg-white font-['Liberation_Sans',Arial,sans-serif]">
      <TopBar />
      <SecondBar />
      <div className="flex flex-1 min-h-0">
        <ModWindow />
        <RightPanel />
      </div>
      <Taskbar />
      <Dialog />
      <div className="absolute left-[1502px] top-[945px] text-[#a0a0a0]/75 pointer-events-none">
        <div className="text-[20px] leading-[26px]">Activate Windows</div>
        <div className="text-[14.500px] leading-[20px] mt-[1px]">Go to System in Control Panel to activate Windows.</div>
      </div>
    </div>
  );
}
